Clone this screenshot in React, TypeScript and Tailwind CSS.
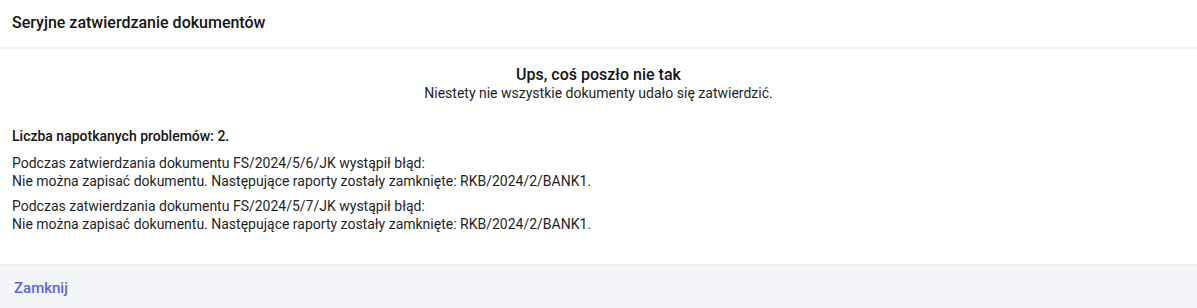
const errors = [
  { doc: 'FS/2024/5/6/JK', report: 'RKB/2024/2/BANK1' },
  { doc: 'FS/2024/5/7/JK', report: 'RKB/2024/2/BANK1' },
];

export default function App() {
  return (
    <div
      className="w-[1197px] h-[308px] bg-white flex flex-col text-[#1f1f1f]"
      style={{ fontFamily: 'Roboto, "Liberation Sans", sans-serif' }}
    >
      {/* Header */}
      <div className="h-[49px] shrink-0 flex items-center px-3 pb-[2px] border-b-2 border-[#f1f1f1]">
        <h1 className="text-[16px] leading-6 font-medium text-[#141414]">
          Seryjne zatwierdzanie dokumentów
        </h1>
      </div>

      {/* Body */}
      <div className="flex-1 px-3">
        <div className="flex flex-col items-center pt-[16px]">
          <h2 className="text-[16px] leading-5 font-medium text-[#141414]">
            Ups, coś poszło nie tak
          </h2>
          <p className="text-[14px] leading-[18px] -mt-[1px]">
            Niestety nie wszystkie dokumenty udało się zatwierdzić.
          </p>
        </div>

        <p className="mt-[25px] text-[14px] leading-[18px] font-medium text-[#141414]">
          Liczba napotkanych problemów: 2.
        </p>

        <div className="mt-[9px] flex flex-col gap-[7px]">
          {errors.map((e) => (
            <p key={e.doc} className="text-[14px] leading-[18px]">
              Podczas zatwierdzania dokumentu {e.doc} wystąpił błąd:
              <br />
              Nie można zapisać dokumentu. Następujące raporty zostały zamknięte: {e.report}.
            </p>
          ))}
        </div>
      </div>

      {/* Footer */}
      <div className="h-[44px] shrink-0 bg-[#f4f5f8] border-t border-[#eceef2] flex items-center px-[14px] pt-[3px]">
        <button className="text-[15px] font-medium text-[#5b63e3]">Zamknij</button>
      </div>
    </div>
  );
}
